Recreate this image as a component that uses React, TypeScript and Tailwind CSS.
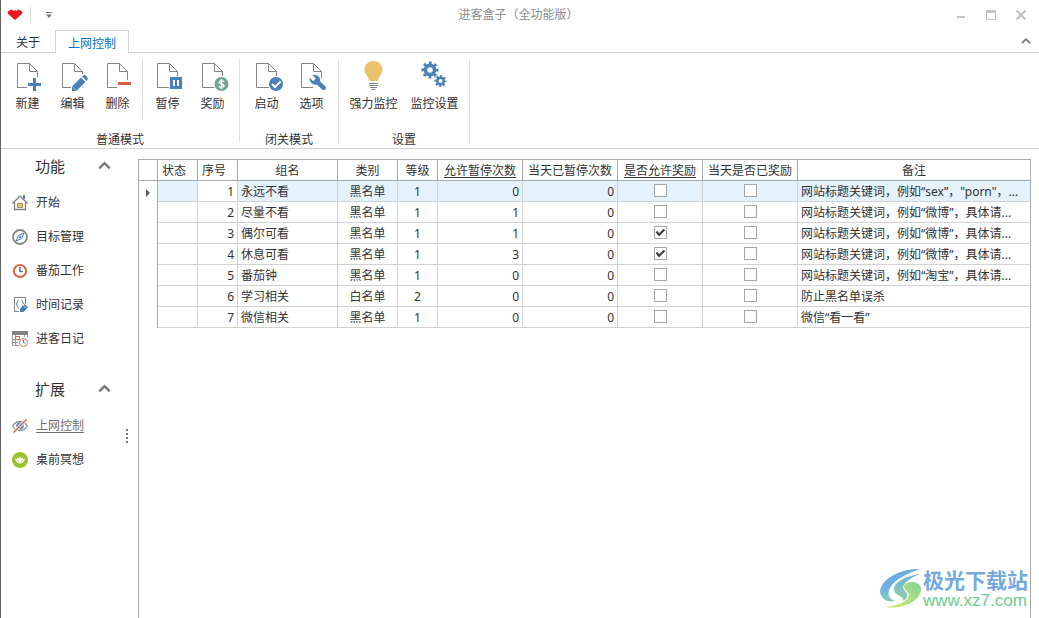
import type { ReactNode } from "react";
import { clsx } from "clsx";

const BLUE = "#4a80b8";
const GRAY = "#848484";

/* ---------- ribbon icons ---------- */

const DocIcon = ({ children }: { children: ReactNode }) => (
  <svg width="32" height="32" viewBox="0 0 32 32" fill="none" aria-hidden="true">
    <path d="M5.5 3.5H17.5L25.5 11.5V27.5H5.5Z" fill="#fff" stroke={GRAY} />
    <path d="M17.5 3.5V11.5H25.5" stroke={GRAY} />
    {children}
  </svg>
);

const NewIcon = () => (
  <DocIcon>
    <path d="M15 17H30V32H15Z" fill="#fff" />
    <path d="M21 18H24V23H29V26H24V31H21V26H16V23H21Z" fill={BLUE} />
  </DocIcon>
);

const EditIcon = () => (
  <DocIcon>
    <path d="M14 32V25L26 14L32 20L21 32Z" fill="#fff" />
    <path d="M15 31V26.5L24 17.5L28.5 22L19.5 31Z" fill={BLUE} />
    <path d="M25 16.5L26.5 15.2Q28 14.8 29 16L30.5 17.5Q31 19 30.5 20L29.5 21Z" fill={BLUE} />
    <path d="M15.5 26.5L19.5 30.5" stroke="#b9cfe6" strokeWidth="0.8" />
  </DocIcon>
);

const DeleteIcon = () => (
  <DocIcon>
    <path d="M15 20H31V28H15Z" fill="#fff" />
    <path d="M16 22H29V25H16Z" fill="#d65f43" />
  </DocIcon>
);

const PauseIcon = () => (
  <DocIcon>
    <path d="M17 16H31V31H17Z" fill="#fff" />
    <path d="M18 17H30V29H18Z" fill={BLUE} />
    <path d="M21 20H23V26H21ZM25 20H27V26H25Z" fill="#fff" />
  </DocIcon>
);

const RewardIcon = () => (
  <DocIcon>
    <circle cx="24.5" cy="24" r="8" fill="#fff" />
    <circle cx="24.5" cy="24" r="7" fill="#72a593" />
    <path
      d="M27 21.6C26.4 20.7 22.4 20.3 22.2 22.4C22.1 24.4 27 23.5 27 25.7C26.8 27.7 22.7 27.4 22 26.3M24.5 19V29"
      stroke="#fff"
      strokeWidth="1.4"
    />
  </DocIcon>
);

const StartIcon = () => (
  <DocIcon>
    <circle cx="25" cy="24" r="8" fill="#fff" />
    <circle cx="25" cy="24" r="7" fill={BLUE} />
    <path d="M21 24L24 27L29.5 21.5" stroke="#fff" strokeWidth="2" />
  </DocIcon>
);

const OptionsIcon = () => (
  <DocIcon>
    <path d="M12 14H25V18L32 28V32H24L12 24Z" fill="#fff" />
    <path
      d="M16.5 15C20.5 14 25 17 24 21.3L29.5 26.5C31 28.7 28.5 31 26.3 29.7L20.8 24.5C17 25.5 12.8 22 13.8 17.8L17.2 21.2L19.8 18.6Z"
      fill={BLUE}
    />
  </DocIcon>
);

const BulbIcon = () => (
  <svg width="32" height="32" viewBox="0 0 32 32" fill="none" aria-hidden="true">
    <path d="M15.5 1C10.3 1 6.5 4.8 6.5 9.7C6.5 14.2 10.5 15.8 11 21H20C20.5 15.8 24.5 14.2 24.5 9.7C24.5 4.8 20.7 1 15.5 1Z" fill="#edc26d" />
    <path d="M11 23.5H20M11 25.5H20M12 27.5H19M13.5 29.5H17.5" stroke={GRAY} />
  </svg>
);

const GearsIcon = () => (
  <svg width="32" height="32" viewBox="0 0 32 32" fill="none" stroke={BLUE} aria-hidden="true">
    <circle cx="11" cy="10" r="4.6" strokeWidth="3.6" />
    <circle cx="11" cy="10" r="7.3" strokeWidth="2.6" strokeDasharray="2.867 2.867" strokeDashoffset="1.43" />
    <circle cx="21.5" cy="21" r="3.2" strokeWidth="2.6" />
    <circle cx="21.5" cy="21" r="5.1" strokeWidth="2" strokeDasharray="2.003 2.003" strokeDashoffset="1" />
  </svg>
);

/* ---------- sidebar icons ---------- */

const SideSvg = ({ children }: { children: ReactNode }) => (
  <svg width="16" height="16" viewBox="0 0 16 16" fill="none" className="shrink-0" aria-hidden="true">
    {children}
  </svg>
);

const HomeIcon = () => (
  <SideSvg>
    <path d="M11 0H13V4H11Z" fill={BLUE} />
    <path d="M0.5 8.5L8 1L15.5 8.5M2.5 7V14.5H13.5V7" stroke={GRAY} strokeWidth="1.3" />
    <path d="M5.5 8.5H10.5V12.5H5.5Z" fill="#f3c566" stroke="#a99160" />
  </SideSvg>
);

const CompassIcon = () => (
  <SideSvg>
    <circle cx="8" cy="8" r="7" stroke="#858585" strokeWidth="1.8" />
    <path d="M12 4L9.6 9.6L4 12L6.4 6.4Z" fill="#fff" stroke={BLUE} />
    <circle cx="8" cy="8" r="1" stroke={BLUE} />
  </SideSvg>
);

const ClockIcon = () => (
  <SideSvg>
    <circle cx="8" cy="8" r="6.1" stroke="#dc6548" strokeWidth="2" />
    <path d="M8 4V8.5H11" stroke="#707070" strokeWidth="1.6" />
  </SideSvg>
);

const RecordIcon = () => (
  <SideSvg>
    <path d="M7 14.5H2.5V0.5H13.5V7" stroke={GRAY} />
    <path d="M6.5 3C5 3 5.8 6 4.3 7C5.8 8 5 11 6.5 11M9.5 3C11 3 10.2 6 11.7 7" stroke={BLUE} />
    <path d="M8 15V11.5L12.5 7L16 10.5L11.5 15Z" fill={BLUE} />
    <path d="M11.5 8.5L14.5 11.5" stroke="#dce8f4" strokeWidth="0.7" />
  </SideSvg>
);

const DiaryIcon = () => (
  <SideSvg>
    <path d="M0 0H16V4H0Z" fill={GRAY} />
    <path d="M0.5 4V14.5H7M0 8.5H7M3.5 4V14.5M12.5 4V6M15.5 4V6M0 11.5H6" stroke="#999" />
    <path d="M3.5 5.5H7.5V8.5H3.5Z" fill="#fff" stroke="#d65f43" />
    <circle cx="11.5" cy="11.5" r="4" fill="#fff" stroke="#df7a61" />
    <path d="M11.5 9V12H13.5" stroke="#888" />
  </SideSvg>
);

const BlockedIcon = () => (
  <SideSvg>
    <path d="M0.7 8C4 2 12 2 15.3 8C12 14 4 14 0.7 8Z" stroke="#929292" strokeWidth="1.3" />
    <circle cx="8" cy="8" r="3.8" fill="#5b91c5" />
    <path d="M1.5 14.5L14.5 1.5" stroke="#fff" strokeWidth="3" />
    <path d="M1.5 14.5L14.5 1.5" stroke="#dc6548" strokeWidth="1.6" />
  </SideSvg>
);

const LotusIcon = () => (
  <SideSvg>
    <circle cx="8" cy="8" r="8" fill="#9ac22f" />
    <path d="M8 11.5C5.5 11.5 3.6 9.5 3 6.5L5.2 7.3L5.5 5L7 6.8L8 4.3L9 6.8L10.5 5L10.8 7.3L13 6.5C12.4 9.5 10.5 11.5 8 11.5Z" fill="#fff" />
    <path d="M6 8L7.2 10.8M10 8L8.8 10.8" stroke="#9ac22f" strokeWidth="0.6" />
  </SideSvg>
);

/* Chevron used by the ribbon and the sidebar sections */
const ChevronUp = ({ size }: { size: number }) => (
  <svg width={size} height={size} viewBox="0 0 10 10" fill="none" aria-hidden="true">
    <path d="M1 7.2L5 3.2L9 7.2" stroke="#777" strokeWidth="1.8" />
  </svg>
);

/* ---------- data ---------- */

const groups = [
  {
    caption: "普通模式",
    buttons: [
      { label: "新建", icon: <NewIcon /> },
      { label: "编辑", icon: <EditIcon /> },
      { label: "删除", icon: <DeleteIcon />, divider: true },
      { label: "暂停", icon: <PauseIcon /> },
      { label: "奖励", icon: <RewardIcon /> },
    ],
  },
  {
    caption: "闭关模式",
    buttons: [
      { label: "启动", icon: <StartIcon /> },
      { label: "选项", icon: <OptionsIcon /> },
    ],
  },
  {
    caption: "设置",
    buttons: [
      { label: "强力监控", icon: <BulbIcon />, wide: true },
      { label: "监控设置", icon: <GearsIcon />, wide: true },
    ],
  },
];

const sections = [
  {
    title: "功能",
    items: [
      { label: "开始", icon: <HomeIcon /> },
      { label: "目标管理", icon: <CompassIcon /> },
      { label: "番茄工作", icon: <ClockIcon /> },
      { label: "时间记录", icon: <RecordIcon /> },
      { label: "进客日记", icon: <DiaryIcon /> },
    ],
  },
  {
    title: "扩展",
    items: [
      { label: "上网控制", icon: <BlockedIcon />, active: true },
      { label: "桌前冥想", icon: <LotusIcon /> },
    ],
  },
];

const columns = [
  { label: "状态", width: "w-[40px]", align: "text-left pl-1!" },
  { label: "序号", width: "w-[40px]", align: "text-left pl-1!" },
  { label: "组名", width: "w-[100px]" },
  { label: "类别", width: "w-[60px]" },
  { label: "等级", width: "w-[40px]" },
  { label: "允许暂停次数", width: "w-[85px]", underline: true },
  { label: "当天已暂停次数", width: "w-[95px]" },
  { label: "是否允许奖励", width: "w-[85px]", underline: true },
  { label: "当天是否已奖励", width: "w-[95px]" },
  { label: "备注", width: "" },
];

const rows = [
  { name: "永远不看", type: "黑名单", level: 1, allowed: 0, used: 0, reward: false, note: "网站标题关键词，例如“sex”，\"porn\"，..." },
  { name: "尽量不看", type: "黑名单", level: 1, allowed: 1, used: 0, reward: false, note: "网站标题关键词，例如“微博”，具体请..." },
  { name: "偶尔可看", type: "黑名单", level: 1, allowed: 1, used: 0, reward: true, note: "网站标题关键词，例如“微博”，具体请..." },
  { name: "休息可看", type: "黑名单", level: 1, allowed: 3, used: 0, reward: true, note: "网站标题关键词，例如“微博”，具体请..." },
  { name: "番茄钟", type: "黑名单", level: 1, allowed: 0, used: 0, reward: false, note: "网站标题关键词，例如“淘宝”，具体请..." },
  { name: "学习相关", type: "白名单", level: 2, allowed: 0, used: 0, reward: false, note: "防止黑名单误杀" },
  { name: "微信相关", type: "黑名单", level: 1, allowed: 0, used: 0, reward: false, note: "微信“看一看”" },
];

/* ---------- parts ---------- */

const TitleBar = () => (
  <header className="flex h-[30px] items-center">
    <div className="flex flex-1 items-center">
      <svg width="16" height="12" viewBox="0 0 16 12" className="ml-1.5" aria-hidden="true">
        <path d="M3 1L5 0.5L6.5 2L8 1L9.5 2L11 0.5L13 1L15.5 3L15 5L13 6.5L11.5 8L8 11L4.5 8L3 6.5L1 5L0.5 3Z" fill="#e8191f" />
      </svg>
      <div className="ml-[7px] h-4 w-px bg-[#d9d9d9]" />
      <button aria-label="自定义快速访问" className="ml-3.5">
        <svg width="8" height="6" viewBox="0 0 8 6">
          <path d="M1 0H7V1H1ZM1 2.5H7L4 6Z" fill="#777" />
        </svg>
      </button>
    </div>
    <h1 className="pl-2.5 text-[#8c8c8c]">进客盒子（全功能版）</h1>
    <div className="flex flex-1 items-center justify-end gap-5 pr-[13px]">
      <button aria-label="最小化">
        <svg width="10" height="10" viewBox="0 0 10 10">
          <path d="M1 6H9V8H1Z" fill="#c4c4c4" />
        </svg>
      </button>
      <button aria-label="最大化">
        <svg width="10" height="10" viewBox="0 0 10 10" fill="none">
          <path d="M0.5 0.5H9.5V9.5H0.5Z" stroke="#c4c4c4" />
          <path d="M0 0H10V3H0Z" fill="#c4c4c4" />
        </svg>
      </button>
      <button aria-label="关闭">
        <svg width="10" height="10" viewBox="0 0 10 10">
          <path d="M0.5 0.5L9.5 9.5M9.5 0.5L0.5 9.5" stroke="#c0c0c0" strokeWidth="2" />
        </svg>
      </button>
    </div>
  </header>
);

const Tabs = () => (
  <nav className="flex h-[23px] border-b border-[#d2d2d2]">
    <button className="px-[15px] pt-1">关于</button>
    <button className="-mb-px border border-b-0 border-[#d2d2d2] bg-white px-3 pt-1 text-[#0072c6]">上网控制</button>
    <button aria-label="折叠功能区" className="mr-2 ml-auto">
      <ChevronUp size={10} />
    </button>
  </nav>
);

const Ribbon = () => (
  <div className="flex border-b border-[#d2d2d2]">
    {groups.map((group) => (
      <div key={group.caption} className="flex">
        <div className="px-1">
          <div className="flex h-[79px] pt-[7px]">
            {group.buttons.map((b) => (
              <div key={b.label} className="flex">
                <button className={clsx("flex flex-col items-center gap-1", "wide" in b ? "w-[61px]" : "w-[45px]")}>
                  {b.icon}
                  <span>{b.label}</span>
                </button>
                {"divider" in b && <div className="mx-0.5 h-[60px] w-px bg-[#dedede]" />}
              </div>
            ))}
          </div>
          <div className="text-center">{group.caption}</div>
        </div>
        <div className="my-1.5 w-px bg-[#dedede]" />
      </div>
    ))}
  </div>
);

const Sidebar = () => (
  <aside className="flex w-[115px] shrink-0 flex-col gap-4">
    {sections.map((section) => (
      <section key={section.title}>
        <button className="flex h-[33px] w-full items-center justify-between pr-[5px] pl-[34px] text-[15px]">
          {section.title}
          <ChevronUp size={13} />
        </button>
        <ul className="pt-1">
          {section.items.map((item) => (
            <li key={item.label}>
              <a href="#" className="flex h-[34px] items-center gap-2 pl-[11px]">
                {item.icon}
                <span className={clsx("whitespace-nowrap", "active" in item && "text-[#707070] underline underline-offset-2")}>
                  {item.label}
                </span>
              </a>
            </li>
          ))}
        </ul>
      </section>
    ))}
  </aside>
);

const Splitter = () => (
  <div className="flex w-[22px] shrink-0 flex-col items-center gap-0.5 pt-[280px]">
    {[0, 1, 2, 3].map((i) => (
      <div key={i} className="size-0.5 bg-[#777]" />
    ))}
  </div>
);

const CheckBox = ({ label, checked }: { label: string; checked?: boolean }) => (
  <label className="relative mx-auto mb-1 block size-[13px]">
    <input
      type="checkbox"
      aria-label={label}
      defaultChecked={checked}
      className="peer block size-[13px] appearance-none border border-[#a6a6a6] bg-white"
    />
    <svg width="13" height="13" viewBox="0 0 13 13" fill="none" className="pointer-events-none absolute inset-0 hidden peer-checked:block">
      <path d="M2.5 5.5L5 8.8L10.5 3.5" stroke="#404040" strokeWidth="2.2" />
    </svg>
  </label>
);

const Grid = () => (
  <table className="w-full table-fixed border-separate border-spacing-0">
    <thead className="[&_th]:h-[22px] [&_th]:border-y [&_th]:border-r [&_th]:border-[#a9a9a9] [&_th]:p-0 [&_th]:pt-0.5">
      <tr>
        <th className="w-[19px]" />
        {columns.map((col) => (
          <th key={col.label} className={clsx("overflow-hidden font-normal whitespace-nowrap", col.width, col.align)}>
            <span className={clsx(col.underline && "underline underline-offset-2")}>{col.label}</span>
          </th>
        ))}
      </tr>
    </thead>
    <tbody className="[&_td]:h-[21px] [&_td]:border-r [&_td]:border-[#d2d2d2] [&_td]:p-0 [&_td]:pt-0.5 [&_td:first-child]:border-r-[#a9a9a9] [&_td:last-child]:border-r-[#a9a9a9]">
      {rows.map((row, i) => (
        <tr key={row.name} className={clsx("[&_td+td]:border-b", i === 0 && "[&_td+td]:bg-[#e5f1fb]")}>
          <td>
            {i === 0 && (
              <svg width="4" height="8" viewBox="0 0 4 8" className="mx-auto" aria-hidden="true">
                <path d="M0 0L4 4L0 8Z" fill="#606060" />
              </svg>
            )}
          </td>
          <td />
          <td className={clsx("pr-[3px]! text-right", i === 0 && "bg-white!")}>{i + 1}</td>
          <td className="pl-[3px]!">{row.name}</td>
          <td className="text-center">{row.type}</td>
          <td className="text-center">{row.level}</td>
          <td className="pr-[3px]! text-right">{row.allowed}</td>
          <td className="pr-[3px]! text-right">{row.used}</td>
          <td>
            <CheckBox label={`${row.name} 是否允许奖励`} checked={row.reward} />
          </td>
          <td>
            <CheckBox label={`${row.name} 当天是否已奖励`} />
          </td>
          <td className="truncate pl-[3px]!">{row.note}</td>
        </tr>
      ))}
    </tbody>
  </table>
);

const Watermark = () => (
  <div className="pointer-events-none absolute right-[11px] bottom-2 flex items-center">
    <svg width="43" height="42" viewBox="0 0 43 42" aria-hidden="true">
      <defs>
        <linearGradient id="swirl" x1="0" y1="0" x2="0" y2="1">
          <stop offset="0" stopColor="#6aa9e4" />
          <stop offset="0.6" stopColor="#74b0e0" />
          <stop offset="1" stopColor="#86cfc0" />
        </linearGradient>
        <linearGradient id="inner" x1="0" y1="0" x2="0" y2="1">
          <stop offset="0" stopColor="#6fb0e2" />
          <stop offset="1" stopColor="#8ed2a4" />
        </linearGradient>
        <linearGradient id="leaf" x1="0" y1="1" x2="1" y2="0">
          <stop offset="0" stopColor="#d6e96c" />
          <stop offset="1" stopColor="#84d596" />
        </linearGradient>
      </defs>
      <path d="M40 1C24 0 2 9 0 23C0 30 7 35 15 33C9 31 7 26 10 20C15 11 28 5 40 1Z" fill="url(#swirl)" />
      <path d="M40 6C26 8 14 14 14 21C14 28 24 27 23 33C28 31 29 26 25 23C20 19 25 12 40 6Z" fill="url(#inner)" />
      <path d="M25 16C31 12 41 14 41 21C41 33 22 42 4 39C18 38 28 34 29 27C29 23 21 21 25 16Z" fill="url(#leaf)" />
    </svg>
    <div className="whitespace-nowrap">
      <div className="text-[21px] leading-6 font-bold text-[#74a9de]">极光下载站</div>
      <div className="font-['Liberation_Sans',sans-serif] text-[17px] leading-[18px] text-[#6fcb8e]">www.xz7.com</div>
    </div>
  </div>
);

export default function App() {
  return (
    <div
      lang="zh-CN"
      className="relative flex min-h-screen flex-col border-l border-[#666] bg-white font-['Noto_Sans','Noto_Sans_CJK_SC',sans-serif] text-[12px] leading-4 text-[#333]"
    >
      <TitleBar />
      <Tabs />
      <Ribbon />
      <div className="flex flex-1">
        <Sidebar />
        <Splitter />
        <main className="flex min-w-0 flex-1 pt-2.5 pr-2">
          <div className="min-w-0 flex-1 border-x border-[#a9a9a9]">
            <div className="-mr-px">
              <Grid />
            </div>
          </div>
        </main>
      </div>
      <Watermark />
    </div>
  );
}
